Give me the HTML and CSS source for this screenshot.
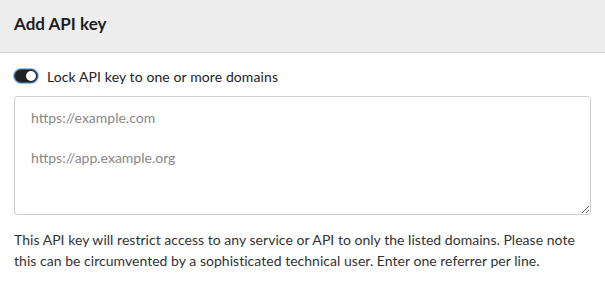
FILE: index.html
```html
<!DOCTYPE html>
<html lang="en">
<head>
    <meta charset="UTF-8">
    <meta name="viewport" content="width=device-width, initial-scale=1.0">
    <title>Add API key</title>
    <link rel="stylesheet" href="styles.css">
</head>
<body>
    <div class="modal">
        <div class="modal-header">Add API key</div>

        <div class="modal-body">
            <!-- Domain lock toggle -->
            <label class="toggle-row">
                <input type="checkbox" class="toggle-input" checked>
                <span class="toggle"></span>
                <span class="toggle-label">Lock API key to one or more domains</span>
            </label>

            <textarea class="domains" rows="6" placeholder="https://example.com&#10;&#10;https://app.example.org"></textarea>

            <p class="help-text">This API key will restrict access to any service or API to only the listed domains. Please note this can be circumvented by a sophisticated technical user. Enter one referrer per line.</p>
        </div>
    </div>
</body>
</html>
```

FILE: styles.css
```css
body {
    font-family: Lato, "Noto Sans", sans-serif;
    background-color: #ffffff;
    margin: 0;
    color: #222;
}
.modal {
    width: 605px;
}
.modal-header {
    background-color: #ededed;
    border-bottom: 1px solid #d6d6d6;
    height: 53px;
    box-sizing: border-box;
    padding: 13px 14px 0;
    font-size: 17px;
    font-weight: bold;
    color: #1e1e1e;
}
.modal-body {
    padding: 15px 14px 0;
}
.toggle-row {
    display: flex;
    align-items: center;
    gap: 8px;
    height: 16px;
    cursor: pointer;
}
.toggle-input {
    display: none;
}
.toggle {
    position: relative;
    width: 22px;
    height: 12px;
    border-radius: 8px;
    background-color: #222;
    border: 1px solid #2a5d8c;
    box-shadow: 0 0 0 1px #9cc3e6;
}
.toggle::after {
    content: "";
    position: absolute;
    top: 1px;
    right: 1px;
    width: 10px;
    height: 10px;
    border-radius: 50%;
    background-color: #ffffff;
}
.toggle-label {
    font-size: 14px;
    letter-spacing: 0.1px;
    margin-left: 1px;
}
.domains {
    display: block;
    width: 577px;
    height: 119px;
    margin-top: 12px;
    box-sizing: border-box;
    padding: 11px 16px;
    font-family: inherit;
    font-size: 14px;
    line-height: 20px;
    border: 1px solid #cfcfcf;
    border-radius: 3px;
    resize: vertical;
}
.domains::placeholder {
    color: #888;
}
.help-text {
    margin: 14px 0 0;
    font-size: 14px;
    line-height: 21px;
    letter-spacing: 0.03px;
    color: #333;
}
```
